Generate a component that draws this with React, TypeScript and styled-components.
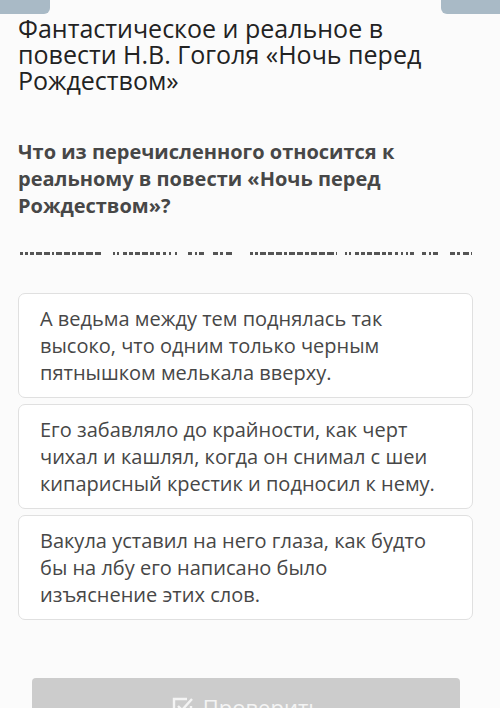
import React from 'react';
import styled, { createGlobalStyle } from 'styled-components';

const GlobalStyle = createGlobalStyle`
  html, body {
    margin: 0;
    padding: 0;
    background: #fbfbfb;
  }
  body {
    font-family: "Open Sans", "Noto Sans", sans-serif;
    overflow: hidden;
  }
`;

const Page = styled.div`
  width: 500px;
  height: 708px;
  overflow: hidden;
  display: flex;
  flex-direction: column;
`;

const TopBar = styled.div`
  display: flex;
  justify-content: space-between;
  height: 14px;
  flex-shrink: 0;
`;

const Tab = styled.div<{ $side: 'left' | 'right' }>`
  width: ${p => (p.$side === 'left' ? '50px' : '59px')};
  height: 14px;
  background: #a9bac6;
  border-radius: ${p => (p.$side === 'left' ? '0 0 6px 0' : '0 0 0 6px')};
`;

const Title = styled.h1`
  margin: 0;
  padding: 1px 18px 0;
  font-size: 25px;
  font-weight: 400;
  line-height: 26px;
  color: #222;
`;

const Question = styled.h2`
  margin: 0;
  padding: 45px 18px 0;
  font-size: 20px;
  font-weight: 700;
  line-height: 27px;
  color: #474747;
`;

// the cut-off bottom edge of a hint line under the question
const DashLine = styled.div`
  position: relative;
  height: 3px;
  margin: 33px 0 0 20px;
  flex-shrink: 0;
`;

const Dash = styled.span`
  position: absolute;
  top: 0;
  height: 3px;
  background: #555;
`;

const Options = styled.div`
  display: flex;
  flex-direction: column;
  gap: 6px;
  margin: 38px 27px 0 18px;
`;

const Card = styled.div`
  background: #fff;
  border: 1px solid #e0e0e0;
  border-radius: 7px;
  padding: 11px 21px 11px;
  font-size: 20px;
  line-height: 27px;
  color: #474747;
`;

const ButtonRow = styled.div`
  margin: 58px 40px 0 32px;
  flex-shrink: 0;
`;

const CheckButton = styled.div`
  height: 48px;
  background: #cccccc;
  border-radius: 4px 4px 0 0;
  display: flex;
  align-items: flex-start;
  justify-content: center;
  gap: 8px;
  padding-top: 17px;
  color: #f4f4f4;
  font-size: 22px;
  line-height: 24px;
`;

const segments: [number, number][] = [
  [0, 3], [5, 8], [10, 14], [16, 22], [24, 30], [32, 34], [36, 42], [44, 50], [52, 56], [58, 64], [66, 73], [75, 81],
  [93, 95], [97, 99], [103, 107], [109, 113], [115, 120], [122, 128], [130, 134], [136, 140], [143, 146], [149, 151], [155, 157],
  [168, 172], [175, 177], [179, 184], [193, 198], [200, 203], [206, 212],
  [230, 233], [235, 238], [240, 246], [248, 254], [256, 262], [264, 267], [269, 275], [277, 283], [285, 289], [291, 297], [299, 305], [307, 314], [316, 317],
  [325, 327], [329, 331], [335, 339], [341, 345], [347, 352], [354, 360], [362, 366], [368, 372], [375, 378], [381, 383], [386, 388], [390, 394],
  [402, 406], [409, 411], [413, 418], [430, 435], [437, 440], [443, 449], [451, 452],
];

const options = [
  ['А ведьма между тем поднялась так', 'высоко, что одним только черным', 'пятнышком мелькала вверху.'],
  ['Его забавляло до крайности, как черт', 'чихал и кашлял, когда он снимал с шеи', 'кипарисный крестик и подносил к нему.'],
  ['Вакула уставил на него глаза, как будто', 'бы на лбу его написано было', 'изъяснение этих слов.'],
];

export default function App() {
  return (
    <Page>
      <GlobalStyle />
      <TopBar>
        <Tab $side="left" />
        <Tab $side="right" />
      </TopBar>
      <Title>
        Фантастическое и реальное в<br />
        повести Н.В. Гоголя «Ночь перед<br />
        Рождеством»
      </Title>
      <Question>
        Что из перечисленного относится к<br />
        реальному в повести «Ночь перед<br />
        Рождеством»?
      </Question>
      <DashLine>
        {segments.map(([a, b], i) => (
          <Dash key={i} style={{ left: a, width: b - a }} />
        ))}
      </DashLine>
      <Options>
        {options.map((lines, i) => (
          <Card key={i}>
            {lines.map((l, j) => (
              <div key={j}>{l}</div>
            ))}
          </Card>
        ))}
      </Options>
      <ButtonRow>
        <CheckButton>
          <svg width="24" height="24" viewBox="0 0 24 24" fill="none" stroke="#f4f4f4" strokeWidth="2.4">
            <path d="M20 11v9H3V4h13" />
            <path d="M7 11l4 4 10-11" />
          </svg>
          Проверить
        </CheckButton>
      </ButtonRow>
    </Page>
  );
}
